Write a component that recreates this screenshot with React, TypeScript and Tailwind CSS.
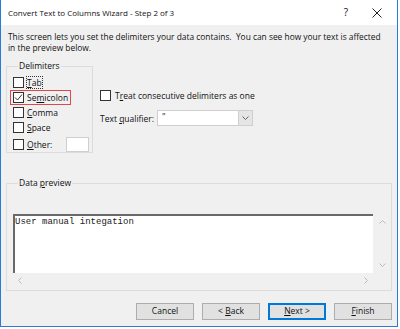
import React from "react";

const Key = ({ children }: { children: React.ReactNode }) => (
  <span className="underline underline-offset-[1px]">{children}</span>
);

const Check = ({ checked = false }: { checked?: boolean }) => (
  <span className="flex h-[11px] w-[11px] shrink-0 items-center justify-center border border-[#333] bg-white">
    {checked && (
      <svg width="9" height="9" viewBox="0 0 9 9">
        <path d="M1 4.5 L3.5 7 L8 1.5" fill="none" stroke="#333" strokeWidth="1" />
      </svg>
    )}
  </span>
);

const Btn = ({ children, primary = false }: { children: React.ReactNode; primary?: boolean }) => (
  <button
    className={
      primary
        ? "h-[17px] w-[58px] border border-[#0078d7] bg-[#e1e1e1] text-[8.5px] leading-none text-[#111] outline outline-1 -outline-offset-2 outline-[#0078d7]"
        : "h-[17px] w-[58px] border border-[#adadad] bg-[#e1e1e1] text-[8.5px] leading-none text-[#111]"
    }
  >
    {children}
  </button>
);

export default function App() {
  return (
    <div className="h-[329px] w-[400px] bg-white font-['Open_Sans',sans-serif] text-[#111]">
      <div className="flex h-[327px] w-[398px] flex-col border-x border-b border-[#2b7bd4]">
        {/* title bar */}
        <div className="flex h-[25px] items-center bg-white pl-[7px] pr-[15px] text-[8px]">
          <span className="flex-1">Convert Text to Columns Wizard - Step 2 of 3</span>
          <span className="mr-[24px] text-[10px]">?</span>
          <svg width="10" height="10" viewBox="0 0 10 10">
            <path d="M0.5 0.5 L9.5 9.5 M9.5 0.5 L0.5 9.5" stroke="#222" strokeWidth="1" />
          </svg>
        </div>

        <div className="flex flex-1 flex-col bg-[#f0f0f0] pl-[5px] pr-[5px]">
          <p className="whitespace-nowrap pl-[2px] pt-[6px] text-[8.4px] leading-[11px]">
            This screen lets you set the delimiters your data contains.&nbsp; You can see how your text is affected
            <br />
            in the preview below.
          </p>

          <div className="mt-[8px] flex">
            <fieldset className="h-[92px] w-[87px] border border-[#dcdcdc] pl-[6px]">
              <legend className="ml-[5px] px-[1px] text-[8.5px] leading-[10px]">Delimiters</legend>
              <div className="mt-[6px] flex flex-col gap-[4px] text-[8.5px] leading-[11px]">
                <label className="flex items-center gap-[3px]">
                  <Check />
                  <span className="outline outline-1 outline-dotted outline-[#333]">
                    <Key>T</Key>ab
                  </span>
                </label>
                <label className="-my-[2px] -ml-[3px] flex w-[61px] items-center gap-[3px] border border-[#e0474c] py-[1px] pl-[2px]">
                  <Check checked />
                  <span>
                    Se<Key>m</Key>icolon
                  </span>
                </label>
                <label className="flex items-center gap-[3px]">
                  <Check />
                  <span>
                    <Key>C</Key>omma
                  </span>
                </label>
                <label className="flex items-center gap-[3px]">
                  <Check />
                  <span>
                    <Key>S</Key>pace
                  </span>
                </label>
                <label className="flex items-center gap-[3px]">
                  <Check />
                  <span>
                    <Key>O</Key>ther:
                  </span>
                  <span className="ml-[11px] h-[15px] w-[23px] border border-[#cfcfcf] bg-white" />
                </label>
              </div>
            </fieldset>

            <div className="ml-[7px] mt-[29px] flex flex-col text-[8.5px] leading-[11px]">
              <label className="flex items-center gap-[4px]">
                <Check />
                <span>
                  T<Key>r</Key>eat consecutive delimiters as one
                </span>
              </label>
              <div className="mt-[9px] flex items-center">
                <span className="w-[57px]">
                  Text <Key>q</Key>ualifier:
                </span>
                <div className="flex h-[16px] w-[96px] border border-[#cfcfcf] bg-white">
                  <span className="flex-1 pl-[4px] text-[9px] text-[#222]">"</span>
                  <span className="flex w-[14px] items-center justify-center border-l border-[#cfcfcf] bg-[#e5e5e5]">
                    <svg width="7" height="4" viewBox="0 0 7 4">
                      <path d="M0.5 0.5 L3.5 3.5 L6.5 0.5" fill="none" stroke="#666" strokeWidth="1" />
                    </svg>
                  </span>
                </div>
              </div>
            </div>
          </div>

          <fieldset className="mt-[25px] h-[113px] w-[386px] border border-[#dcdcdc] pl-[6px]">
            <legend className="ml-[5px] px-[1px] text-[8.5px] leading-[10px]">
              Data <Key>p</Key>review
            </legend>
            <div className="mt-[26px] flex">
              <div className="h-[59px] w-[360px] border-l-2 border-t-2 border-[#696969] bg-white font-['Liberation_Mono',monospace] text-[9px] leading-[12px] text-[#222]">
                User manual integation
              </div>
              <div className="flex h-[59px] w-[18px] flex-col items-center justify-between py-[6px]">
                <svg width="7" height="4" viewBox="0 0 7 4">
                  <path d="M0.5 3.5 L3.5 0.5 L6.5 3.5" fill="none" stroke="#bbb" strokeWidth="1" />
                </svg>
                <svg width="7" height="4" viewBox="0 0 7 4">
                  <path d="M0.5 0.5 L3.5 3.5 L6.5 0.5" fill="none" stroke="#bbb" strokeWidth="1" />
                </svg>
              </div>
            </div>
            <div className="flex h-[14px] w-[360px] items-center justify-between px-[5px]">
              <svg width="4" height="7" viewBox="0 0 4 7">
                <path d="M3.5 0.5 L0.5 3.5 L3.5 6.5" fill="none" stroke="#bbb" strokeWidth="1" />
              </svg>
              <svg width="4" height="7" viewBox="0 0 4 7">
                <path d="M0.5 0.5 L3.5 3.5 L0.5 6.5" fill="none" stroke="#bbb" strokeWidth="1" />
              </svg>
            </div>
          </fieldset>

          <div className="mt-[12px] flex justify-end gap-[8px] pr-[0px]">
            <Btn>Cancel</Btn>
            <Btn>
              &lt; <Key>B</Key>ack
            </Btn>
            <Btn primary>
              <Key>N</Key>ext &gt;
            </Btn>
            <Btn>
              <Key>F</Key>inish
            </Btn>
          </div>
        </div>
      </div>
    </div>
  );
}
